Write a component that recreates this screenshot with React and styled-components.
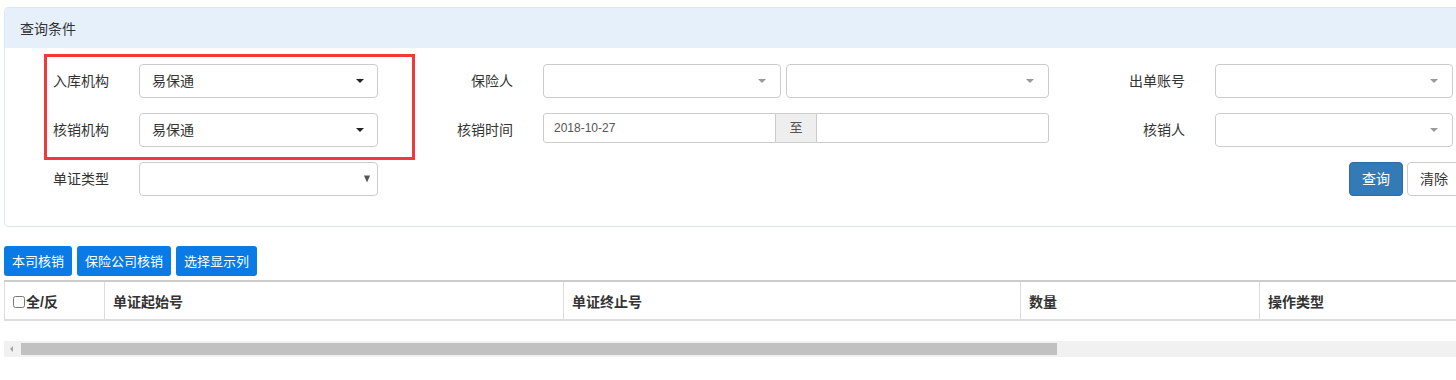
import styled, { createGlobalStyle } from "styled-components";

const GlobalStyle = createGlobalStyle`
  html, body {
    margin: 0;
    padding: 0;
    background: #ffffff;
    overflow: hidden;
  }
  body {
    font-family: "Liberation Sans", "Noto Sans CJK SC", sans-serif;
    font-size: 14px;
    color: #333333;
  }
`;

export default function App() {
  return (
    <>
      <GlobalStyle />
      <Page>
        <Panel>
          <PanelHeader>查询条件</PanelHeader>
          <Form>
            <Label>入库机构</Label>
            <Select $caret="dark">易保通</Select>
            <Label>保险人</Label>
            <Pair>
              <Select $caret="gray" />
              <Select $caret="gray" />
            </Pair>
            <Label>出单账号</Label>
            <Select $caret="gray" />

            <Label>核销机构</Label>
            <Select $caret="dark">易保通</Select>
            <Label>核销时间</Label>
            <DateRange>
              <DateInput>2018-10-27</DateInput>
              <Addon>至</Addon>
              <DateInput />
            </DateRange>
            <Label>核销人</Label>
            <Select $caret="gray" />

            <Label>单证类型</Label>
            <Select $caret="native" />
            <Actions>
              <Button $primary>查询</Button>
              <Button>清除</Button>
            </Actions>
          </Form>
          <Highlight />
        </Panel>

        <Toolbar>
          <ToolButton>本司核销</ToolButton>
          <ToolButton>保险公司核销</ToolButton>
          <ToolButton>选择显示列</ToolButton>
        </Toolbar>

        <Table>
          <thead>
            <tr>
              <Th $w={100}>
                <Check type="checkbox" readOnly />
                全/反
              </Th>
              <Th $w={459}>单证起始号</Th>
              <Th $w={457}>单证终止号</Th>
              <Th $w={239}>数量</Th>
              <Th>操作类型</Th>
            </tr>
          </thead>
        </Table>

        <Scrollbar>
          <ScrollArrow />
          <ScrollThumb />
        </Scrollbar>
      </Page>
    </>
  );
}

const Page = styled.div`
  width: 1480px;
  padding: 7px 0 0 4px;
`;

const Panel = styled.div`
  position: relative;
  border: 1px solid #dbe7f5;
  border-radius: 4px;
  background: #ffffff;
  overflow: hidden;
`;

const PanelHeader = styled.div`
  height: 40px;
  line-height: 42px;
  padding-left: 15px;
  background: #e6f0fb;
  font-size: 14px;
  color: #333;
`;

const Form = styled.div`
  display: grid;
  grid-template-columns: 104px 239px 105px 506px 106px 238px;
  grid-auto-rows: 34px;
  column-gap: 30px;
  row-gap: 15px;
  padding: 16px 0 30px 0;
`;

const Label = styled.div`
  align-self: center;
  text-align: right;
  font-size: 14px;
  line-height: 20px;
  color: #333;
`;

const carets = {
  dark: `
    right: 13px;
    border-left: 4px solid transparent;
    border-right: 4px solid transparent;
    border-top: 4px solid #222;
  `,
  gray: `
    right: 14px;
    border-left: 4px solid transparent;
    border-right: 4px solid transparent;
    border-top: 4px solid #999;
  `,
  native: `
    right: 7px;
    border-left: 3px solid transparent;
    border-right: 3px solid transparent;
    border-top: 7px solid #555;
  `,
};

const Select = styled.div`
  position: relative;
  box-sizing: border-box;
  height: 34px;
  padding: 0 12px;
  border: 1px solid #cccccc;
  border-radius: 4px;
  background: #fff;
  font-size: 14px;
  line-height: 32px;
  color: #333;

  &::after {
    content: "";
    position: absolute;
    top: 50%;
    transform: translateY(-50%);
    width: 0;
    height: 0;
    ${(p) => carets[p.$caret]}
  }
`;

const Pair = styled.div`
  display: grid;
  grid-template-columns: 238px 1fr;
  gap: 5px;
`;

const DateRange = styled.div`
  display: flex;
  height: 30px;
`;

const DateInput = styled.div`
  flex: 1;
  box-sizing: border-box;
  height: 30px;
  padding: 0 10px;
  border: 1px solid #ccc;
  font-size: 12px;
  line-height: 28px;
  color: #555;

  &:first-child {
    border-radius: 3px 0 0 3px;
  }
  &:last-child {
    border-radius: 0 3px 3px 0;
  }
`;

const Addon = styled.div`
  box-sizing: border-box;
  width: 40px;
  height: 30px;
  border-top: 1px solid #ccc;
  border-bottom: 1px solid #ccc;
  background: #eeeeee;
  text-align: center;
  font-size: 13px;
  line-height: 28px;
  color: #555;
`;

const Actions = styled.div`
  grid-column: 5 / 7;
  display: flex;
  justify-content: flex-end;
  gap: 4px;
  margin-right: -8px;
`;

const Button = styled.div`
  box-sizing: border-box;
  width: 54px;
  height: 34px;
  border: 1px solid ${(p) => (p.$primary ? "#2e6da4" : "#cccccc")};
  border-radius: 4px;
  background: ${(p) => (p.$primary ? "#337ab7" : "#ffffff")};
  color: ${(p) => (p.$primary ? "#ffffff" : "#333333")};
  text-align: center;
  font-size: 14px;
  line-height: 32px;
`;

const Highlight = styled.div`
  position: absolute;
  left: 39px;
  top: 46px;
  width: 371px;
  height: 106px;
  box-sizing: border-box;
  border: 3px solid #f03a3a;
  pointer-events: none;
`;

const Toolbar = styled.div`
  display: flex;
  gap: 5px;
  margin-top: 19px;
`;

const ToolButton = styled.div`
  height: 30px;
  padding: 0 8px;
  border-radius: 3px;
  background: #0a7be6;
  color: #fff;
  font-size: 13px;
  line-height: 31px;
`;

const Table = styled.table`
  margin-top: 4px;
  width: 1480px;
  border-collapse: collapse;
  border-top: 2px solid #cccccc;
  border-bottom: 2px solid #dddddd;
`;

const Th = styled.th`
  box-sizing: border-box;
  width: ${(p) => (p.$w ? `${p.$w}px` : "auto")};
  height: 39px;
  padding: 0 8px;
  border-left: 1px solid #dddddd;
  text-align: left;
  font-size: 14px;
  font-weight: bold;
  color: #333;
  white-space: nowrap;
`;

const Check = styled.input`
  width: 12px;
  height: 12px;
  margin: 0 1px 0 0;
  vertical-align: -1px;
`;

const Scrollbar = styled.div`
  display: flex;
  align-items: center;
  height: 16px;
  margin-top: 20px;
  background: #f1f1f1;
`;

const ScrollArrow = styled.div`
  width: 0;
  height: 0;
  margin: 0 8px 0 6px;
  border-top: 3px solid transparent;
  border-bottom: 3px solid transparent;
  border-right: 3px solid #a3a3a3;
`;

const ScrollThumb = styled.div`
  width: 1036px;
  height: 12px;
  background: #c1c1c1;
`;
